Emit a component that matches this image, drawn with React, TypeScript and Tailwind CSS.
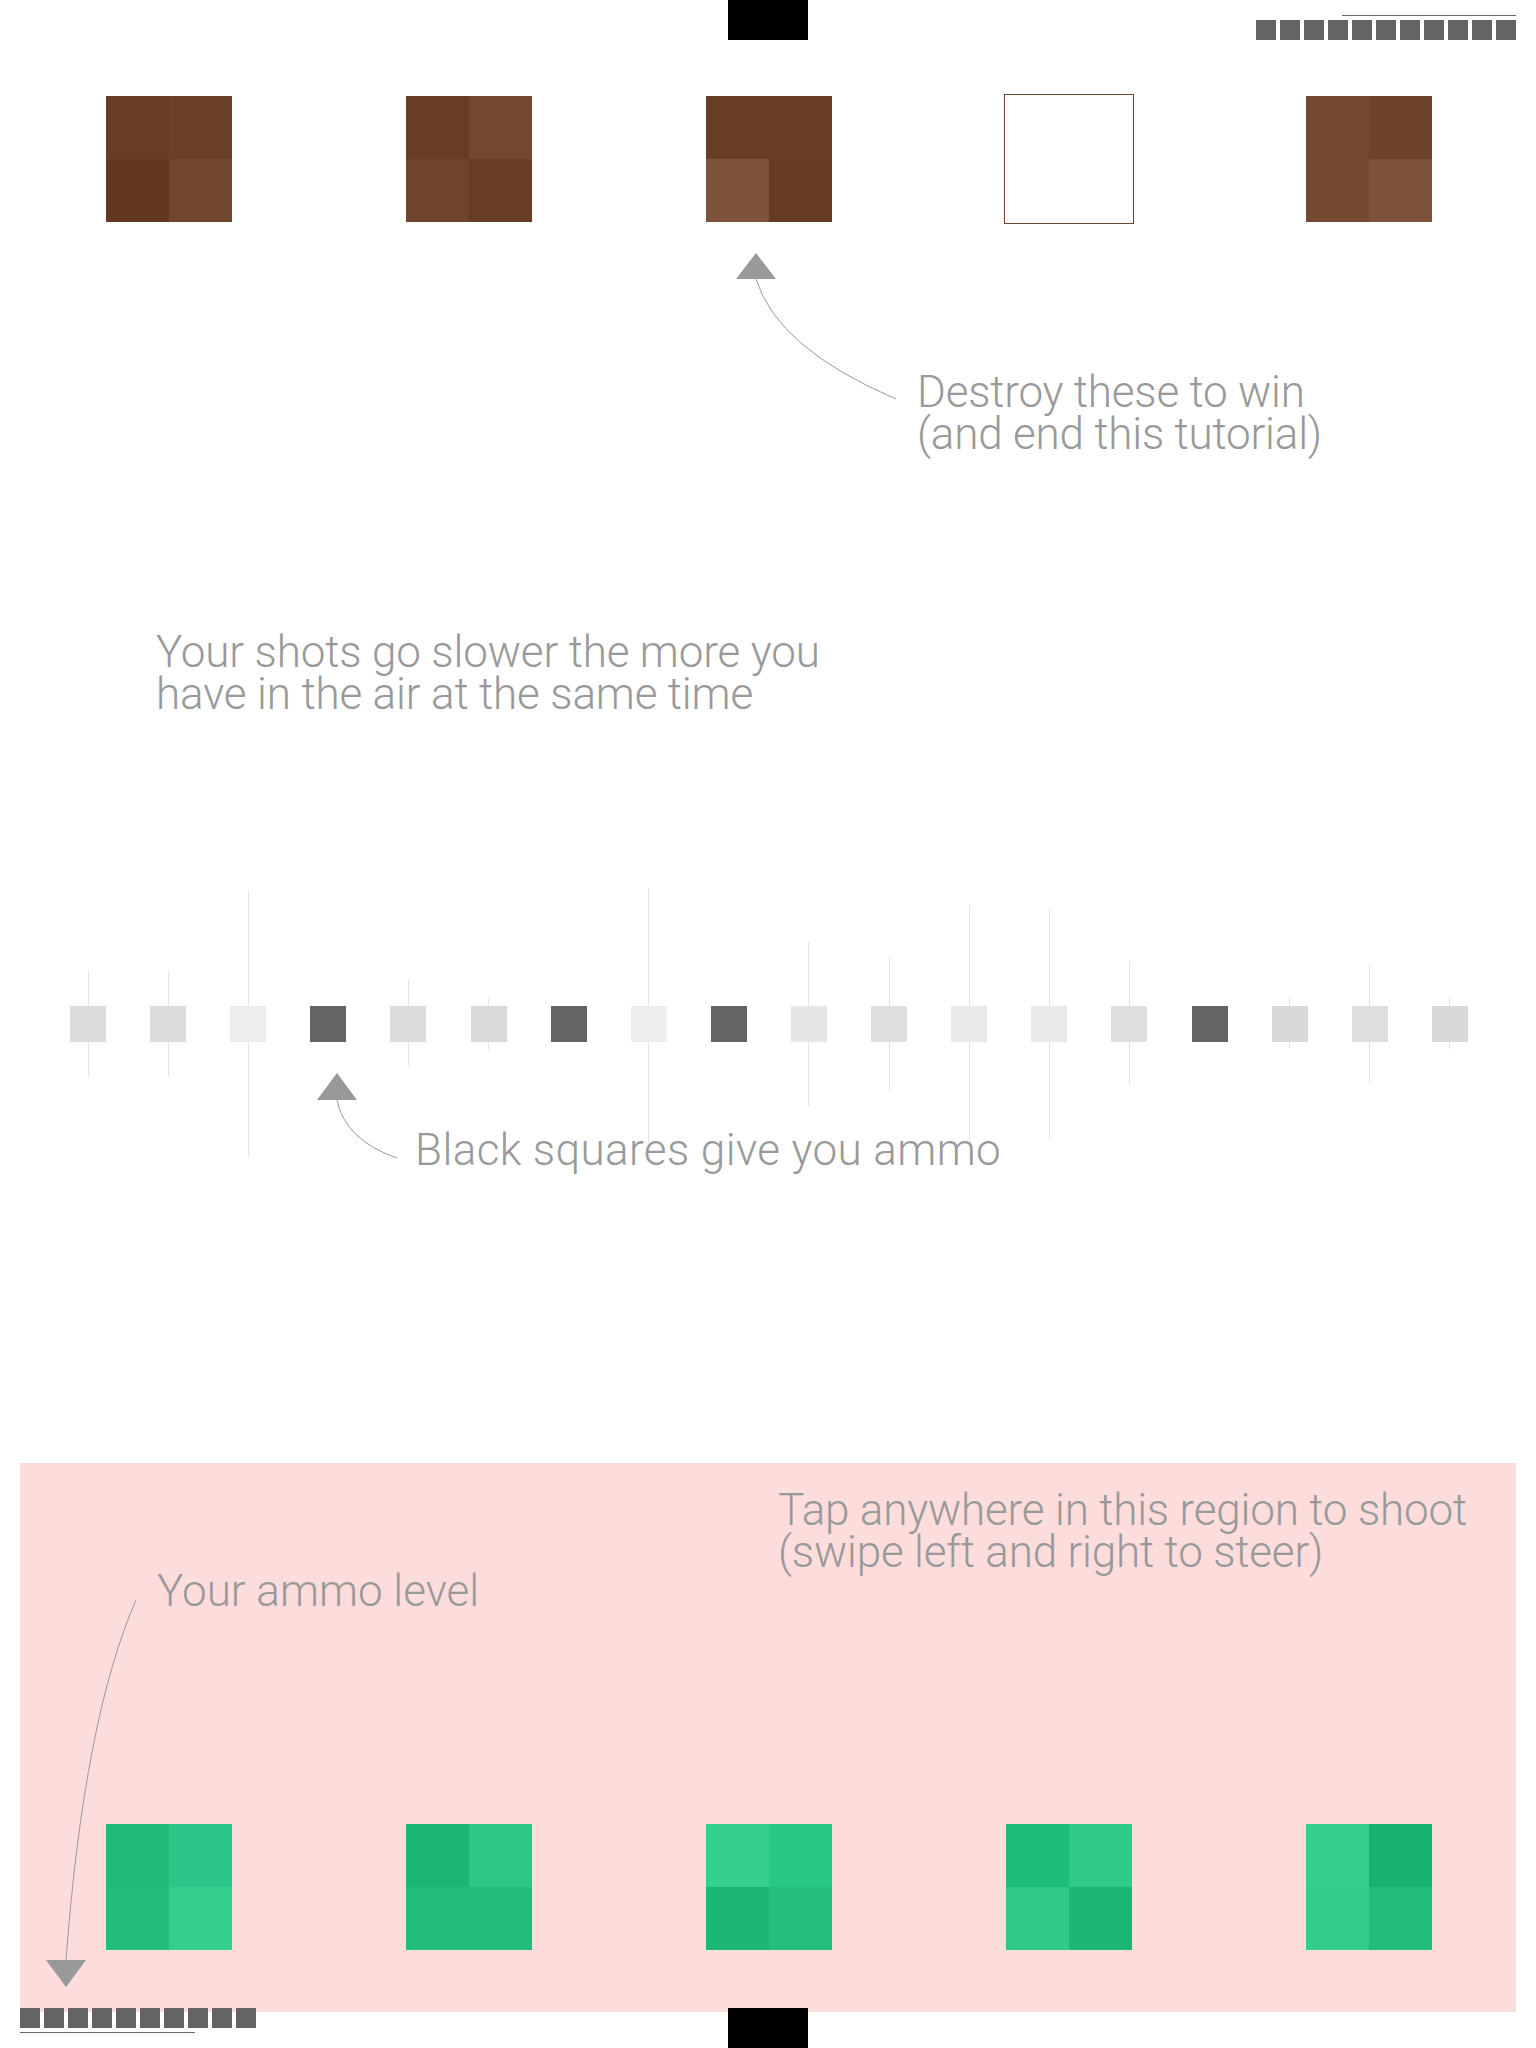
const brown = [
  ["bg-[#683c25]", "bg-[#6a3f28]", "bg-[#643820]", "bg-[#724730]"],
  ["bg-[#683d26]", "bg-[#734931]", "bg-[#6e442d]", "bg-[#683c25]"],
  ["bg-[#693e27]", "bg-[#693e27]", "bg-[#7d533b]", "bg-[#673b24]"],
  null,
  ["bg-[#734930]", "bg-[#6d442b]", "bg-[#734930]", "bg-[#7c523a]"],
];

const green = [
  ["bg-[#20bb79]", "bg-[#2bc687]", "bg-[#22bd7b]", "bg-[#33cd8c]"],
  ["bg-[#1bb574]", "bg-[#2cc686]", "bg-[#22bd7b]", "bg-[#22bd7b]"],
  ["bg-[#35cf8d]", "bg-[#2ac685]", "bg-[#1bb574]", "bg-[#24bf7d]"],
  ["bg-[#1fbb78]", "bg-[#2fc988]", "bg-[#2fc988]", "bg-[#1bb574]"],
  ["bg-[#35cf8d]", "bg-[#18b270]", "bg-[#33cd8b]", "bg-[#22bd7b]"],
];

// falling squares: colour, trail above, trail below
const dots = [
  { c: "bg-[#dcdcdc]", t: 36, b: 35 },
  { c: "bg-[#dcdcdc]", t: 35, b: 34 },
  { c: "bg-[#eeeeee]", t: 116, b: 115 },
  { c: "bg-[#646464]", t: 0, b: 0 },
  { c: "bg-[#dcdcdc]", t: 26, b: 25 },
  { c: "bg-[#d9d9d9]", t: 9, b: 9 },
  { c: "bg-[#646464]", t: 0, b: 0 },
  { c: "bg-[#eeeeee]", t: 118, b: 101 },
  { c: "bg-[#646464]", t: 0, b: 0 },
  { c: "bg-[#e6e6e6]", t: 64, b: 64 },
  { c: "bg-[#dedede]", t: 49, b: 48 },
  { c: "bg-[#e9e9e9]", t: 100, b: 98 },
  { c: "bg-[#e9e9e9]", t: 98, b: 97 },
  { c: "bg-[#dedede]", t: 44, b: 43 },
  { c: "bg-[#646464]", t: 0, b: 0 },
  { c: "bg-[#d8d8d8]", t: 8, b: 6 },
  { c: "bg-[#dedede]", t: 41, b: 41 },
  { c: "bg-[#d8d8d8]", t: 8, b: 7 },
];

function Block({ cells }: { cells: string[] }) {
  return (
    <div className="grid grid-cols-2 w-[126px] h-[126px] shrink-0">
      {cells.map((c, i) => (
        <div key={i} className={c} />
      ))}
    </div>
  );
}

function Ammo({ count }: { count: number }) {
  return (
    <div className="flex gap-1">
      {Array.from({ length: count }).map((_, i) => (
        <div key={i} className="w-5 h-5 bg-[#646464]" />
      ))}
    </div>
  );
}

const label = "font-['Roboto',sans-serif] font-light text-[44px] leading-[42px] text-[#999999] whitespace-nowrap";

export default function App() {
  return (
    <div className="relative w-[1536px] h-[2048px] bg-white overflow-hidden">
      {/* opponent edge */}
      <div className="grid grid-cols-[1fr_80px_1fr] h-10">
        <div />
        <div className="bg-black" />
        <div className="flex flex-col items-end pr-5">
          <div className="mt-[15px] h-px w-[174px] bg-[#666666]" />
          <div className="mt-1">
            <Ammo count={11} />
          </div>
        </div>
      </div>

      {/* targets */}
      <div className="grid grid-cols-5 grid-rows-[126px] w-[1500px] ml-[19px] mt-[56px] h-[126px]">
        {brown.map((b, i) => (
          <div key={i} className="flex items-center justify-center">
            {b ? <Block cells={b} /> : <div className="w-[130px] h-[130px] shrink-0 border border-[#6e4530]" />}
          </div>
        ))}
      </div>

      <p className={`${label} tracking-[-0.2px] ml-[917px] mt-[149px]`}>
        Destroy these to win
        <br />
        (and end this tutorial)
      </p>

      <p className={`${label} tracking-[-0.15px] ml-[156px] mt-[176px]`}>
        Your shots go slower the more you
        <br />
        have in the air at the same time
      </p>

      {/* shots in flight */}
      <div className="flex items-start justify-between w-[1398px] ml-[70px] mt-[173px] h-[154px]">
        {dots.map((d, i) => (
          <div key={i} className="flex flex-col w-9 shrink-0">
            <div className="h-[118px] shrink-0 flex flex-col justify-end">
              <div className="w-px mx-auto shrink-0 bg-[#e4e4e4]" style={{ height: d.t }} />
            </div>
            <div className={`w-9 h-9 shrink-0 ${d.c}`} />
            <div className="w-px mx-auto shrink-0 bg-[#e4e4e4]" style={{ height: d.b }} />
          </div>
        ))}
      </div>

      <p className={`${label} tracking-[0.4px] ml-[415px] mt-[87px]`}>Black squares give you ammo</p>

      {/* player region */}
      <div className="mx-5 mt-[292px] h-[549px] bg-[#fddcdc] flex flex-col">
        <div className="flex h-[149px]">
          <div className="w-[758px] shrink-0 pl-[137px] pt-[107px]">
            <p className={label}>Your ammo level</p>
          </div>
          <p className={`${label} tracking-[-0.18px] mt-[26px]`}>
            Tap anywhere in this region to shoot
            <br />
            (swipe left and right to steer)
          </p>
        </div>
        <div className="grid grid-cols-5 w-[1500px] -ml-px mt-[212px]">
          {green.map((g, i) => (
            <div key={i} className="flex justify-center">
              <Block cells={g} />
            </div>
          ))}
        </div>
      </div>

      {/* player edge */}
      <div className="grid grid-cols-[1fr_80px_1fr] h-10 -mt-1">
        <div className="flex flex-col items-start pl-5">
          <Ammo count={10} />
          <div className="mt-1 h-px w-[175px] bg-[#666666]" />
        </div>
        <div className="bg-black" />
        <div />
      </div>

      {/* annotation arrows */}
      <svg className="absolute inset-0 pointer-events-none" width="1536" height="2048" viewBox="0 0 1536 2048">
        <g fill="#999999" stroke="none">
          <polygon points="756,253 776,279 736,279" />
          <polygon points="337,1073 357,1100 317,1100" />
          <polygon points="46,1960 86,1960 66,1987" />
        </g>
        <g fill="none" stroke="#999999" strokeWidth="1">
          <path d="M756 279 Q777 348 896 399" />
          <path d="M337 1100 Q345 1140 397 1158" />
          <path d="M136 1600 Q84 1719 66 1960" />
        </g>
      </svg>
    </div>
  );
}
